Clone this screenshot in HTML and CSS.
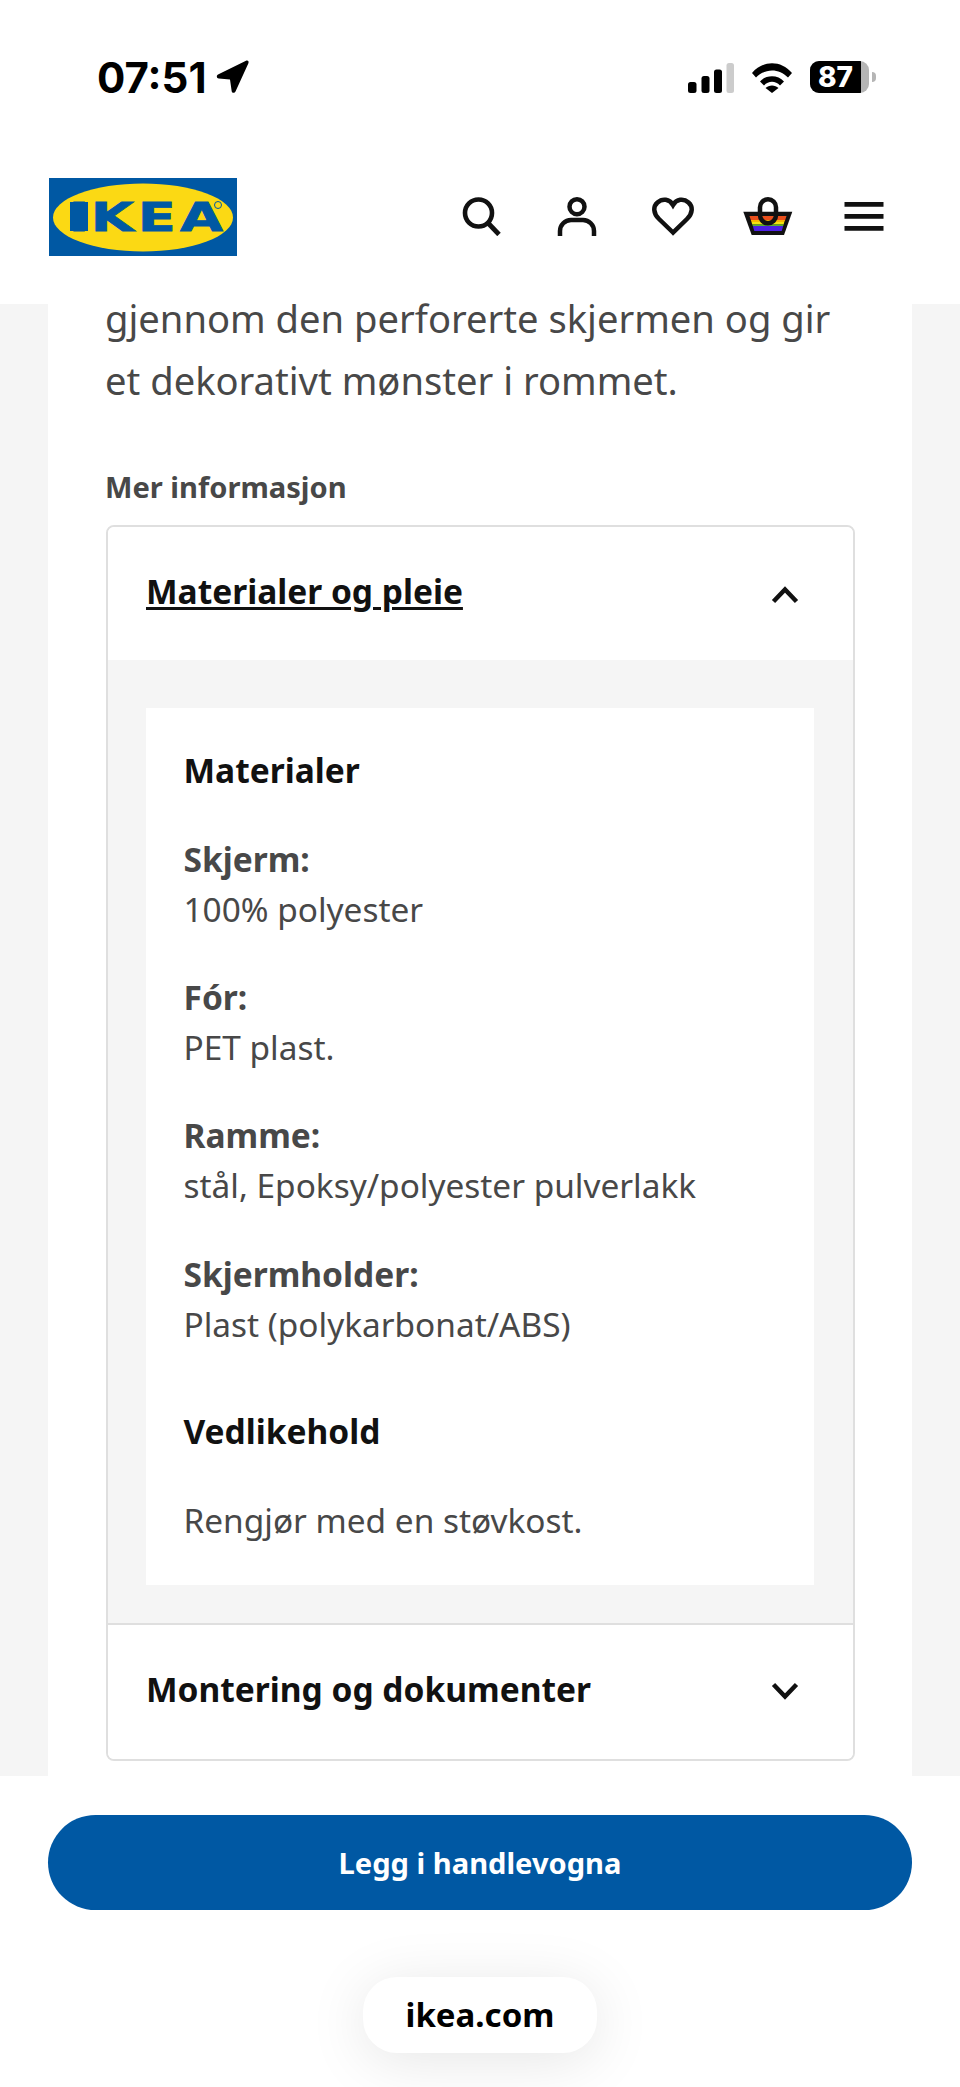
FILE: index.html
```html
<!DOCTYPE html>
<html lang="no">
<head>
<meta charset="utf-8">
<title>IKEA</title>
<link rel="stylesheet" href="styles.css">
</head>
<body>
<div class="screen">
  <div class="status">
    <div class="status-left">
      <span class="time">07:51</span>
      <svg class="loc" viewBox="0 0 34 34" width="34" height="34"><path d="M2 14.500 30 .8c1.800-.8 3.200.6 2.400 2.400L19.500 31.500c-1 2-3.500 1.500-3.800-.3L14 19.500 2.800 18.500C.5 18.300.2 15.400 2 14.500z" fill="#000"/></svg>
    </div>
    <div class="status-right">
      <svg viewBox="0 0 46 30" width="46" height="30"><rect x="0" y="19" width="8.500" height="11" rx="2.500" fill="#000"/><rect x="13.500" y="13" width="8" height="17" rx="2.500" fill="#000"/><rect x="26" y="6.500" width="8" height="23.500" rx="2.500" fill="#000"/><rect x="38.500" y="0" width="7.500" height="30" rx="2.500" fill="#ccc"/></svg>
      <svg viewBox="0 0 40 30" width="40" height="30"><path d="M0 10C11-3 29-3 40 10L36 14.500C27 5 13 5 4 14.500Z" fill="#000"/><path d="M8 18.500C14 11.500 26 11.500 32 18.500L28 22.500C23.500 17.500 16.500 17.500 12 22.500Z" fill="#000"/><path d="M13.500 25C17 21.500 23 21.500 26.500 25L20 30Z" fill="#000"/></svg>
      <div class="battery">
        <div class="battery-body"><span class="battery-fill">87</span><span class="battery-rest"></span></div>
        <span class="battery-cap"></span>
      </div>
    </div>
  </div>

  <header class="nav">
    <svg class="logo" viewBox="0 0 188 78" width="188" height="78">
      <rect width="188" height="78" fill="#0058a3"/>
      <ellipse cx="94" cy="39.500" rx="90" ry="34" fill="#fbd914"/>
      <rect x="21" y="24" width="18" height="29" fill="#0058a3"/>
      <text class="logo-text" transform="scale(1.4 1)" x="14 29.900 63.400 93.600" y="53">IKEA</text>
      <circle cx="169" cy="27" r="3.500" fill="none" stroke="#0058a3" stroke-width="1"/>
    </svg>
    <nav class="nav-icons">
      <span class="nav-cell"><svg viewBox="0 0 40 40" width="40" height="40"><circle cx="17.500" cy="17" r="13.500" fill="none" stroke="#111" stroke-width="4.600"/><path d="M27.500 27.500 38 38.500" stroke="#111" stroke-width="4.800" fill="none"/></svg></span>
      <span class="nav-cell"><svg viewBox="0 0 40 40" width="40" height="40"><circle cx="20" cy="10.700" r="7.500" fill="none" stroke="#111" stroke-width="4.500"/><path d="M3 40v-5a11 11 0 0 1 11-11h12a11 11 0 0 1 11 11v5" fill="none" stroke="#111" stroke-width="4.500"/></svg></span>
      <span class="nav-cell"><svg viewBox="0 0 42 40" width="42" height="40"><path d="M21 36.500 7 23C1 17 1 10.500 5.500 6.500 10.500 2 17.500 3 21 9 24.500 3 31.500 2 36.500 6.500 41 10.500 41 17 35 23z" fill="none" stroke="#111" stroke-width="4.500"/></svg></span>
      <span class="nav-cell"><svg viewBox="0 0 50 40" width="50" height="40">
        <path d="M.3 15.700H49.300L41 39H8.700z" fill="#111"/>
        <path d="M6.500 20H43.500L42.200 24H7.800z" fill="#ea4f1c"/>
        <path d="M7.800 24H42.200L41.300 26H8.500z" fill="#f7b500"/>
        <path d="M8.500 26H41.300L40.600 28.500H9.300z" fill="#f2e30f"/>
        <path d="M9.300 28.500H40.600L40.200 30H9.800z" fill="#58b230"/>
        <path d="M9.800 30H40.200L38.700 35H11.300z" fill="#4c1fe3"/>
        <rect x="17" y="3.300" width="16" height="24" rx="8" fill="none" stroke="#111" stroke-width="4.500"/>
      </svg></span>
      <span class="nav-cell"><svg viewBox="0 0 40 40" width="40" height="40"><path d="M.5 8.300h39M.5 20.300h39M.5 32.300h39" stroke="#111" stroke-width="4.700" fill="none"/></svg></span>
    </nav>
  </header>

  <main class="page">
    <section class="sheet">
      <p class="lead"><span class="lead-line">gjennom den perforerte skjermen og gir</span><span class="lead-line">et dekorativt mønster i rommet.</span></p>
      <h2 class="more">Mer informasjon</h2>
      <div class="accordion">
        <div class="acc-head open">
          <span class="acc-title underlined">Materialer og pleie</span>
          <svg viewBox="0 0 30 20" width="30" height="20"><path d="M3.500 17.500 15 5.500l11.500 12" fill="none" stroke="#111" stroke-width="4.500"/></svg>
        </div>
        <div class="acc-panel">
          <div class="panel-card">
            <h3 class="card-title">Materialer</h3>
            <dl class="facts">
              <div class="fact"><dt>Skjerm:</dt><dd>100% polyester</dd></div>
              <div class="fact"><dt>Fór:</dt><dd>PET plast.</dd></div>
              <div class="fact"><dt>Ramme:</dt><dd>stål, Epoksy/polyester pulverlakk</dd></div>
              <div class="fact"><dt>Skjermholder:</dt><dd>Plast (polykarbonat/ABS)</dd></div>
            </dl>
            <h3 class="card-title care">Vedlikehold</h3>
            <p class="care-text">Rengjør med en støvkost.</p>
          </div>
        </div>
        <div class="acc-head closed">
          <span class="acc-title">Montering og dokumenter</span>
          <svg viewBox="0 0 30 20" width="30" height="20"><path d="M3.500 2.500 15 14.500l11.500-12" fill="none" stroke="#111" stroke-width="4.500"/></svg>
        </div>
      </div>
    </section>
  </main>

  <div class="bottom">
    <button class="cta">Legg i handlevogna</button>
    <div class="url-row"><span class="url">ikea.com</span></div>
  </div>
</div>
</body>
</html>
```

FILE: styles.css
```css
* { box-sizing: border-box; }
html, body { margin: 0; padding: 0; background: #fff; }
body { font-family: "Noto Sans", "Open Sans", sans-serif; color: #484848; }
h2, h3, p, dl, dd { margin: 0; }

.screen { width: 960px; height: 2087px; display: flex; flex-direction: column; overflow: hidden; }

.status { height: 164px; flex: none; display: flex; justify-content: space-between; align-items: flex-start; padding: 57px 84px 0 97px; }
.status-left { display: flex; align-items: center; gap: 9px; }
.time { font-family: Inter, sans-serif; font-weight: 700; font-size: 42px; line-height: 42px; color: #000; }
.loc { margin-top: -2px; }
.status-right { display: flex; align-items: flex-start; gap: 18px; padding-top: 6px; }
.battery { display: flex; align-items: center; gap: 3px; margin-top: -2px; }
.battery-body { width: 59px; height: 32px; border-radius: 9px; overflow: hidden; display: flex; background: #b5b5b5; }
.battery-fill { width: 51px; background: #000; color: #fff; font-family: Inter, sans-serif; font-weight: 800; font-size: 28px; line-height: 32px; text-align: center; }
.battery-rest { flex: 1; }
.battery-cap { width: 4px; height: 10px; background: #b5b5b5; border-radius: 0 4px 4px 0; }

.nav { height: 140px; flex: none; display: flex; justify-content: space-between; align-items: flex-start; padding: 14px 48px 0 49px; background: #fff; }
.logo { display: block; }
.logo-text { font-family: "DejaVu Sans", sans-serif; font-weight: 700; font-size: 39.800px; fill: #0058a3; stroke: #0058a3; stroke-width: .8px; }
.nav-icons { display: grid; grid-template-columns: repeat(5, 95.750px); padding-top: 18px; }
.nav-cell { display: flex; justify-content: center; }

.page { flex: 1; min-height: 0; background: #f5f5f5; padding: 0 48px; }
.sheet { height: 100%; background: #fff; padding: 0 57px; }

.lead { display: flex; flex-direction: column; gap: 34px; font-size: 38.150px; color: #484848; }
.lead-line { display: block; line-height: 28px; white-space: nowrap; }
.more { font-size: 29.100px; font-weight: 700; line-height: 40px; color: #484848; margin-top: 73px; }
.accordion { margin: 18px 0 0 1px; border: 2.500px solid #dfdfdf; border-radius: 8px; overflow: hidden; background: #fff; }

.acc-head { display: flex; justify-content: space-between; align-items: center; padding: 0 53px 0 38px; background: #fff; }
.acc-head.open { height: 133.200px; }
.acc-head.closed { height: 136.500px; border-top: 2.500px solid #dfdfdf; }
.acc-title { font-size: 33.500px; font-weight: 700; color: #111; line-height: 44px; margin-bottom: 6px; }
.underlined { text-decoration: underline; text-underline-offset: 3px; text-decoration-thickness: 2.500px; }

.acc-panel { background: #f5f5f5; padding: 47.600px 39px 38px 37.500px; }
.panel-card { background: #fff; padding: 40px 38px 39.600px; }
.card-title { font-size: 33.500px; font-weight: 700; color: #111; line-height: 44px; }
.facts { margin-top: 42px; display: flex; flex-direction: column; gap: 38.300px; }
.fact dt { font-size: 33.500px; font-weight: 700; line-height: 50px; color: #484848; }
.fact dd { font-size: 33.400px; line-height: 50px; color: #484848; }
.care { margin-top: 60.400px; }
.care-text { font-size: 33.400px; line-height: 50px; color: #484848; margin-top: 42px; }

.bottom { flex: none; height: 311px; background: #fff; padding: 39px 48px 0; display: flex; flex-direction: column; }
.cta { height: 95px; width: 100%; border: 0; border-radius: 48px; background: #0058a3; color: #fff; font-family: "Noto Sans", sans-serif; font-weight: 700; font-size: 29.100px; padding: 0; }
.url-row { display: flex; justify-content: center; margin-top: 67px; }
.url { width: 234px; height: 76px; border-radius: 34px; background: #fff; box-shadow: 0 8px 60px rgba(0,0,0,.1); color: #000; font-family: "Noto Sans", sans-serif; font-weight: 700; font-size: 33px; line-height: 76px; text-align: center; }
```
